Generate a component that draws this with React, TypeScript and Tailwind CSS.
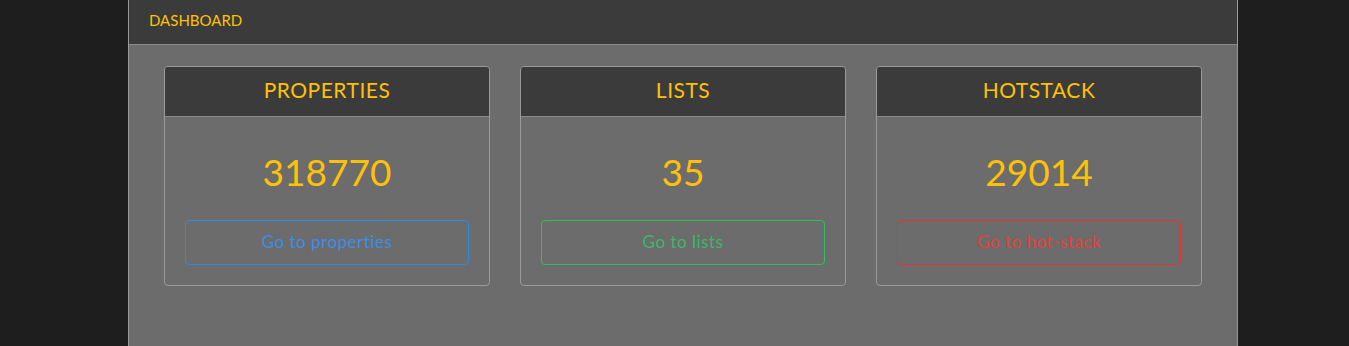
const stats = [
  { title: 'PROPERTIES', value: 318770, label: 'Go to properties', btn: 'border-[#2d8ae0] text-[#3a8ee6]' },
  { title: 'LISTS', value: 35, label: 'Go to lists', btn: 'border-[#2fbf5f] text-[#3cb868]' },
  { title: 'HOTSTACK', value: 29014, label: 'Go to hot-stack', btn: 'border-[#e3342f] text-[#e3403a]' },
]

export default function App() {
  return (
    <div className="min-h-[346px] bg-[#1e1e1e] font-['Lato','Noto_Sans',sans-serif]">
      <div className="ml-[128px] flex min-h-[346px] w-[1110px] flex-col border-x border-[#9a9a9a] bg-[#6c6c6c]">
        <header className="flex h-[45px] items-center border-b border-[#8a8a8a] bg-[#3b3b3b] px-5 pb-1">
          <span className="text-[15px] text-[#ffc107]">DASHBOARD</span>
        </header>
        <main className="grid grid-cols-3 gap-[30px] px-[35px] pt-[21px]">
          {stats.map((s) => (
            <section className="overflow-hidden rounded border border-[#9a9a9a]" key={s.title}>
              <div className="flex h-[50px] items-center justify-center border-b border-[#8a8a8a] bg-[#3b3b3b] pb-1">
                <h2 className="text-[21px] tracking-[0.5px] text-[#ffc107]">{s.title}</h2>
              </div>
              <div className="flex flex-col items-center px-5 pb-5 pt-[32px]">
                <p className="text-[37px] leading-[46px] text-[#ffc107]">{s.value}</p>
                <button className={`mt-[25px] h-[45px] w-full rounded border pb-0.5 text-[17px] tracking-[0.5px] ${s.btn}`} type="button">
                  {s.label}
                </button>
              </div>
            </section>
          ))}
        </main>
      </div>
    </div>
  )
}
